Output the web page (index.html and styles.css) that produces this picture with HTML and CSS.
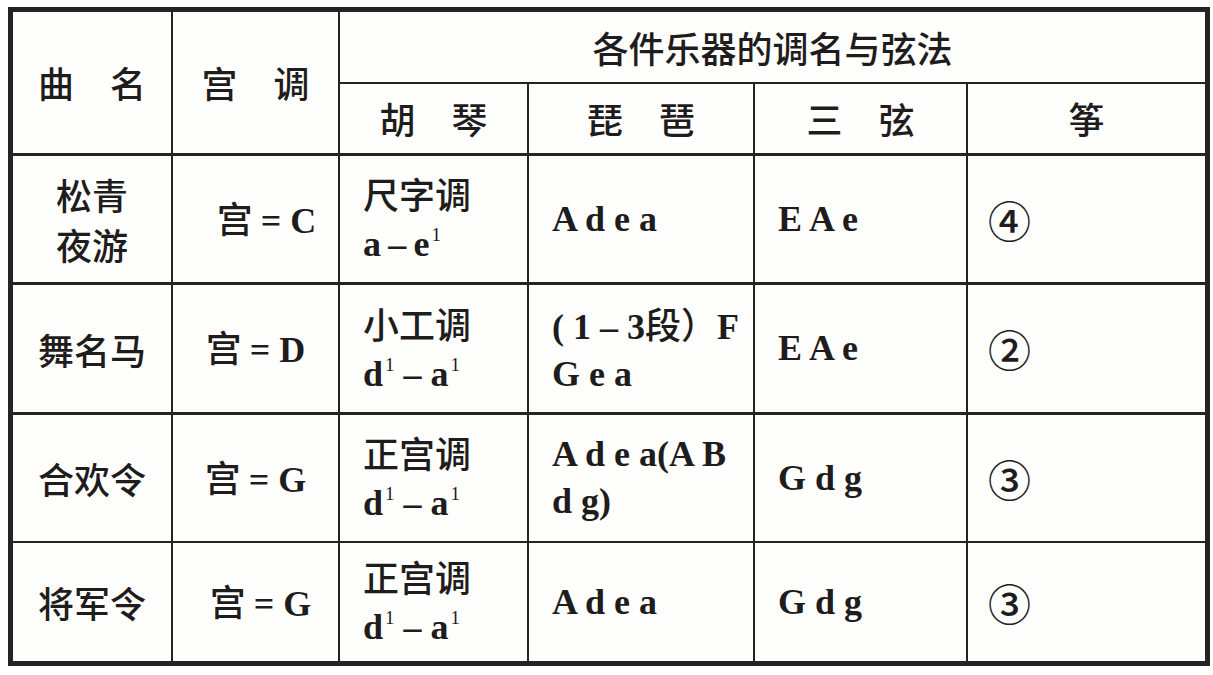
FILE: index.html
```html
<!DOCTYPE html>
<html lang="zh-CN">
<head>
<meta charset="utf-8">
<title>各件乐器的调名与弦法</title>
<link rel="stylesheet" href="styles.css">
</head>
<body>
<table class="tbl">
  <colgroup>
    <col class="c1"><col class="c2"><col class="c3"><col class="c4"><col class="c5"><col class="c6">
  </colgroup>
  <tr class="h1">
    <th rowspan="2" class="hd br bb3">曲　名</th>
    <th rowspan="2" class="hd br bb3">宫　调</th>
    <th colspan="4" class="hd bb2">各件乐器的调名与弦法</th>
  </tr>
  <tr class="h2">
    <th class="hd br bb3">胡　琴</th>
    <th class="hd br bb3">琵　琶</th>
    <th class="hd br bb3">三　弦</th>
    <th class="hd bb3">筝</th>
  </tr>
  <tr class="r1">
    <td class="name br bb3">松青<br>夜游</td>
    <td class="gong shift1 br bb3">宫 <span class="lat">= C</span></td>
    <td class="left br bb3">尺字调<br><span class="lat">a&#8201;–&#8201;e<sup>1</sup></span></td>
    <td class="left lat br bb3">A d e a</td>
    <td class="left lat br bb3">E A e</td>
    <td class="circ bb3">④</td>
  </tr>
  <tr class="r2">
    <td class="name br bb3">舞名马</td>
    <td class="gong br bb3">宫 <span class="lat">= D</span></td>
    <td class="left br bb3">小工调<br><span class="lat">d<sup>1</sup> – a<sup>1</sup></span></td>
    <td class="left lat br bb3">( 1 – 3<span class="cjk">段）</span>F<br>G e a</td>
    <td class="left lat br bb3">E A e</td>
    <td class="circ bb3">②</td>
  </tr>
  <tr class="r3">
    <td class="name br bb2">合欢令</td>
    <td class="gong br bb2">宫 <span class="lat">= G</span></td>
    <td class="left br bb2">正宫调<br><span class="lat">d<sup>1</sup> – a<sup>1</sup></span></td>
    <td class="left lat br bb2">A d e a(A B<br>d g)</td>
    <td class="left lat br bb2">G d g</td>
    <td class="circ bb2">③</td>
  </tr>
  <tr class="r4">
    <td class="name br">将军令</td>
    <td class="gong shift4 br">宫 <span class="lat">= G</span></td>
    <td class="left br">正宫调<br><span class="lat">d<sup>1</sup> – a<sup>1</sup></span></td>
    <td class="left lat br">A d e a</td>
    <td class="left lat br">G d g</td>
    <td class="circ">③</td>
  </tr>
</table>
</body>
</html>
```
FILE: styles.css
```css
html, body {
  margin: 0;
  padding: 0;
  background: #ffffff;
}

body {
  padding: 7px 0 0 8px;
}

.tbl {
  table-layout: fixed;
  border-collapse: separate;
  border-spacing: 0;
  width: 1202px;
  border: 5px solid #262324;
  background: #fefefc;
  color: #1f1c1d;
  font-family: "Liberation Serif", "Noto Sans CJK SC", serif;
  font-size: 36px;
  line-height: 47px;
  font-weight: 500;
}

.c1 { width: 160px; }
.c2 { width: 167px; }
.c3 { width: 189px; }
.c4 { width: 226px; }
.c5 { width: 213px; }
.c6 { width: 237px; }

.tbl th,
.tbl td {
  box-sizing: border-box;
  padding: 0;
  vertical-align: middle;
  font-family: "Noto Sans CJK SC", sans-serif;
  font-weight: 500;
}

.h1 { height: 72px; }
.h2 { height: 72px; }
.r1 { height: 129px; }
.r2 { height: 130px; }
.r3 { height: 128px; }
.r4 { height: 118px; }

.br { border-right: 2px solid #262324; }
.bb2 { border-bottom: 2px solid #262324; }
.bb3 { border-bottom: 3px solid #262324; }

.hd {
  text-align: center;
}

.name {
  text-align: center;
  line-height: 50px;
}

.gong {
  text-align: center;
}

.shift1 { padding-left: 22px !important; }
.shift4 { padding-left: 10px !important; }

.left {
  text-align: left;
  padding-left: 23px !important;
}

.tbl .lat {
  font-family: "Liberation Serif", serif;
  font-weight: 700;
}

.lat .cjk {
  font-family: "Noto Sans CJK SC", sans-serif;
  font-weight: 500;
}

.lat sup {
  font-size: 19px;
  line-height: 0;
  vertical-align: 15px;
  margin-left: 2px;
  font-weight: 400;
}

.circ {
  text-align: left;
  padding-left: 20px !important;
  font-family: "Noto Sans CJK SC", sans-serif;
  font-size: 43px;
  font-weight: 400;
}
```
